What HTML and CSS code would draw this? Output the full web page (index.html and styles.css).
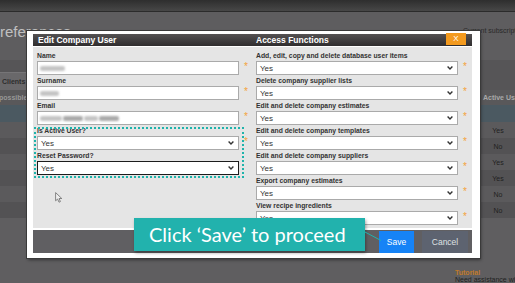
FILE: index.html
```html
<!DOCTYPE html>
<html lang="en">
<head>
  <meta charset="UTF-8">
  <meta name="viewport" content="width=device-width, initial-scale=1.0">
  <title>Edit Company User</title>
  <link rel="stylesheet" href="styles.css">
</head>
<body>
  <!-- page behind the dialog -->
  <div class="page">
    <div class="topbar"></div>
    <div class="title-row">
      <h1>references</h1>
      <span class="plan">Current subscription</span>
    </div>
    <div class="tabs">
      <span class="tab">Clients</span>
    </div>
    <div class="grid-head">
      <span class="cell-left">possible</span>
      <span class="cell-right">Active User</span>
    </div>
    <div class="grid-row selected"></div>
    <div class="grid-row"><span class="cell-right">Yes</span></div>
    <div class="grid-row alt"><span class="cell-right">No</span></div>
    <div class="grid-row"><span class="cell-right">Yes</span></div>
    <div class="grid-row alt"><span class="cell-right">Yes</span></div>
    <div class="grid-row"><span class="cell-right">No</span></div>
    <div class="grid-row alt"><span class="cell-right">No</span></div>
    <div class="help">
      <b>Tutorial</b>
      <span>Need assistance with</span>
    </div>
  </div>

  <div class="modal">
    <div class="modal-head">
      <h2>Edit Company User</h2>
      <div class="head-right">
        <h2>Access Functions</h2>
        <span class="close">X</span>
      </div>
    </div>

    <div class="modal-body">
      <div class="col-left">
        <div class="field">
          <label>Name</label>
          <div class="field-row">
            <div class="input"><span class="blur" style="width: 25px;"></span></div>
            <span class="req">*</span>
          </div>
        </div>
        <div class="field">
          <label>Surname</label>
          <div class="field-row">
            <div class="input"><span class="blur" style="width: 19px;"></span></div>
            <span class="req">*</span>
          </div>
        </div>
        <div class="field">
          <label>Email</label>
          <div class="field-row">
            <div class="input">
              <span class="blur" style="width: 22px;"></span>
              <span class="blur dark" style="width: 20px;"></span>
              <span class="blur" style="width: 14px;"></span>
              <span class="blur dark" style="width: 20px;"></span>
            </div>
            <span class="req">*</span>
          </div>
        </div>

        <div class="group">
          <div class="field">
            <label>Is Active User?</label>
            <div class="field-row">
              <div class="select"><span>Yes</span><svg width="6" height="4" viewBox="0 0 6 4"><polyline points="0.6,0.6 3,3 5.4,0.6"/></svg></div>
              <span class="req">*</span>
            </div>
          </div>
          <div class="field">
            <label>Reset Password?</label>
            <div class="field-row">
              <div class="select focus"><span>Yes</span><svg width="6" height="4" viewBox="0 0 6 4"><polyline points="0.6,0.6 3,3 5.4,0.6"/></svg></div>
            </div>
          </div>
        </div>
      </div>

      <div class="col-right">
        <div class="field">
          <label>Add, edit, copy and delete database user items</label>
          <div class="field-row">
            <div class="select"><span>Yes</span><svg width="6" height="4" viewBox="0 0 6 4"><polyline points="0.6,0.6 3,3 5.4,0.6"/></svg></div>
            <span class="req">*</span>
          </div>
        </div>
        <div class="field">
          <label>Delete company supplier lists</label>
          <div class="field-row">
            <div class="select"><span>Yes</span><svg width="6" height="4" viewBox="0 0 6 4"><polyline points="0.6,0.6 3,3 5.4,0.6"/></svg></div>
            <span class="req">*</span>
          </div>
        </div>
        <div class="field">
          <label>Edit and delete company estimates</label>
          <div class="field-row">
            <div class="select"><span>Yes</span><svg width="6" height="4" viewBox="0 0 6 4"><polyline points="0.6,0.6 3,3 5.4,0.6"/></svg></div>
            <span class="req">*</span>
          </div>
        </div>
        <div class="field">
          <label>Edit and delete company templates</label>
          <div class="field-row">
            <div class="select"><span>Yes</span><svg width="6" height="4" viewBox="0 0 6 4"><polyline points="0.6,0.6 3,3 5.4,0.6"/></svg></div>
            <span class="req">*</span>
          </div>
        </div>
        <div class="field">
          <label>Edit and delete company suppliers</label>
          <div class="field-row">
            <div class="select"><span>Yes</span><svg width="6" height="4" viewBox="0 0 6 4"><polyline points="0.6,0.6 3,3 5.4,0.6"/></svg></div>
            <span class="req">*</span>
          </div>
        </div>
        <div class="field">
          <label>Export company estimates</label>
          <div class="field-row">
            <div class="select"><span>Yes</span><svg width="6" height="4" viewBox="0 0 6 4"><polyline points="0.6,0.6 3,3 5.4,0.6"/></svg></div>
            <span class="req">*</span>
          </div>
        </div>
        <div class="field">
          <label>View recipe ingredients</label>
          <div class="field-row">
            <div class="select"><span>Yes</span><svg width="6" height="4" viewBox="0 0 6 4"><polyline points="0.6,0.6 3,3 5.4,0.6"/></svg></div>
            <span class="req">*</span>
          </div>
        </div>
      </div>
    </div>

    <div class="modal-foot">
      <span class="btn btn-save">Save</span>
      <span class="btn btn-cancel">Cancel</span>
    </div>
  </div>

  <!-- tutorial callout -->
  <div class="callout">Click ‘Save’ to proceed</div>
  <svg class="callout-line" width="17" height="11" viewBox="0 0 17 11"><line x1="0" y1="1" x2="16" y2="9.5"/></svg>

  <svg class="cursor" width="8" height="11" viewBox="0 0 8 11">
    <path d="M0.6 0.6 L0.6 8.8 L2.6 7 L4 10.2 L5.4 9.6 L4.1 6.5 L6.8 6.5 Z"/>
  </svg>
</body>
</html>
```

FILE: styles.css
```css
* {
  box-sizing: border-box;
}

body {
  margin: 0;
  width: 515px;
  height: 283px;
  overflow: hidden;
  position: relative;
  background: #5f5e60;
  font-family: 'Liberation Sans', Arial, sans-serif;
}

/* background page */
.topbar {
  height: 12px;
  background: linear-gradient(#2e2e2e, #474747);
  border-bottom: 1px solid #2b2b2b;
}

.title-row {
  display: flex;
  height: 48px;
  padding-top: 11px;
  background: #5e5d5f;
}

.title-row h1 {
  flex: none;
  width: 463px;
  margin: 0;
  font-size: 15px;
  line-height: 18px;
  font-weight: normal;
  color: #c0c0c0;
}

.plan {
  margin-top: 4px;
  font-size: 7px;
  line-height: 8px;
  color: #2a2a2a;
  white-space: nowrap;
}

.tabs {
  display: flex;
  height: 30px;
  padding-top: 12px;
  background: #565557;
}

.tab {
  height: 18px;
  padding: 0 30px 0 2px;
  line-height: 17px;
  background: #69686a;
  border-top: 1px solid #767577;
  font-size: 7px;
  font-weight: bold;
  color: #2d2d2d;
}

.grid-head {
  display: flex;
  justify-content: space-between;
  height: 15px;
  line-height: 15px;
  background: #59585a;
  font-size: 7px;
  font-weight: bold;
  overflow: hidden;
}

.cell-left {
  color: #979797;
  margin-left: -1px;
}

.cell-right {
  width: 34px;
  text-align: center;
  color: #1f1f1f;
  font-size: 7px;
  white-space: nowrap;
  overflow: hidden;
}

.grid-head .cell-right {
  text-align: left;
  padding-left: 2px;
  color: #a8a8a8;
}

.grid-row {
  display: flex;
  justify-content: flex-end;
  align-items: center;
  height: 16px;
  background: #5b5a5c;
}

.grid-row.alt {
  background: #535254;
}

.grid-row.selected {
  height: 17px;
  background: #4b5961;
}

.help {
  margin: 51px 0 0 455px;
  font-size: 7px;
  line-height: 7px;
}

.help b {
  display: block;
  color: #c07a2a;
}

.help span {
  color: #1e1e1e;
  white-space: nowrap;
}

/* dialog */
.modal {
  position: absolute;
  left: 27px;
  top: 31px;
  width: 453px;
  height: 227px;
  padding: 3px 8px 5px 6px;
  background: #fff;
  box-shadow: 0 0 0 1px #3a3a3a, 1px 2px 3px rgba(0, 0, 0, 0.45);
}

.modal-head {
  display: grid;
  grid-template-columns: 223px 1fr;
  height: 12px;
  background: linear-gradient(#545152, #2f2d2e);
  color: #fff;
  line-height: 12px;
}

.modal-head h2 {
  margin: 0;
  font-size: 8.5px;
  font-weight: bold;
  white-space: nowrap;
}

.modal-head > h2 {
  padding-left: 5px;
}

.head-right {
  display: flex;
  justify-content: space-between;
}

.close {
  width: 20px;
  height: 12px;
  margin: -1px 6px 0 0;
  background: #f39a1e;
  font-size: 8px;
  text-align: center;
}

.modal-body {
  display: grid;
  grid-template-columns: 223px 1fr;
  height: 181px;
  margin-top: 1px;
  padding-top: 3px;
  background: #e5e5e5;
}

.col-left {
  padding-left: 4px;
}

.field label {
  display: block;
  font-size: 6.8px;
  font-weight: bold;
  line-height: 11px;
  color: #333;
  white-space: nowrap;
}

.field-row {
  display: flex;
  gap: 5px;
}

.input,
.select {
  width: 202px;
  height: 14px;
  border: 1px solid #aaa;
  background: #fff;
}

.input {
  display: flex;
  align-items: center;
  gap: 1px;
  padding-left: 2px;
}

.blur {
  display: inline-block;
  height: 5px;
  border-radius: 2px;
  background: #c4c4c4;
  filter: blur(1.2px);
}

.blur.dark {
  background: #a9a9a9;
}

.select {
  display: flex;
  align-items: center;
  justify-content: space-between;
  padding: 0 4px 0 3px;
  font-size: 8px;
  color: #333;
}

.select.focus {
  border-color: #1c1c1c;
}

.select polyline {
  fill: none;
  stroke: #333;
  stroke-width: 1.4;
}

.req {
  height: 14px;
  padding-top: 1px;
  font-size: 10px;
  line-height: 10px;
  color: #f4a23a;
}

/* tutorial highlight around the two fields */
.group {
  position: relative;
}

.group::after {
  content: '';
  position: absolute;
  left: -3px;
  top: 2px;
  bottom: -3px;
  width: 206px;
  border: 2px dotted #1fb3ab;
}

.modal-foot {
  display: flex;
  justify-content: flex-end;
  align-items: flex-end;
  gap: 8px;
  height: 23px;
  margin-top: 2px;
  padding-right: 4px;
  background: #605f62;
}

.btn {
  height: 22px;
  line-height: 22px;
  font-size: 8.5px;
  color: #fff;
  text-align: center;
}

.btn-save {
  width: 35px;
  background: #1683f6;
}

.btn-cancel {
  width: 46px;
  background: #5d6370;
  color: #dfe0e4;
}

/* overlays */
.callout {
  position: absolute;
  left: 134px;
  top: 218px;
  width: 231px;
  height: 33px;
  padding-left: 15px;
  background: #22b2ad;
  box-shadow: 1px 2px 3px rgba(0, 0, 0, 0.35);
  color: #fff;
  font-family: Lato, 'Open Sans', sans-serif;
  font-size: 20px;
  line-height: 33px;
  white-space: nowrap;
}

.callout-line {
  position: absolute;
  left: 365px;
  top: 231px;
}

.callout-line line {
  stroke: #22b2ad;
  stroke-width: 1;
}

.cursor {
  position: absolute;
  left: 55px;
  top: 192px;
}

.cursor path {
  fill: #eeeeee;
  stroke: #6a6a6a;
  stroke-width: 0.8;
}
```
